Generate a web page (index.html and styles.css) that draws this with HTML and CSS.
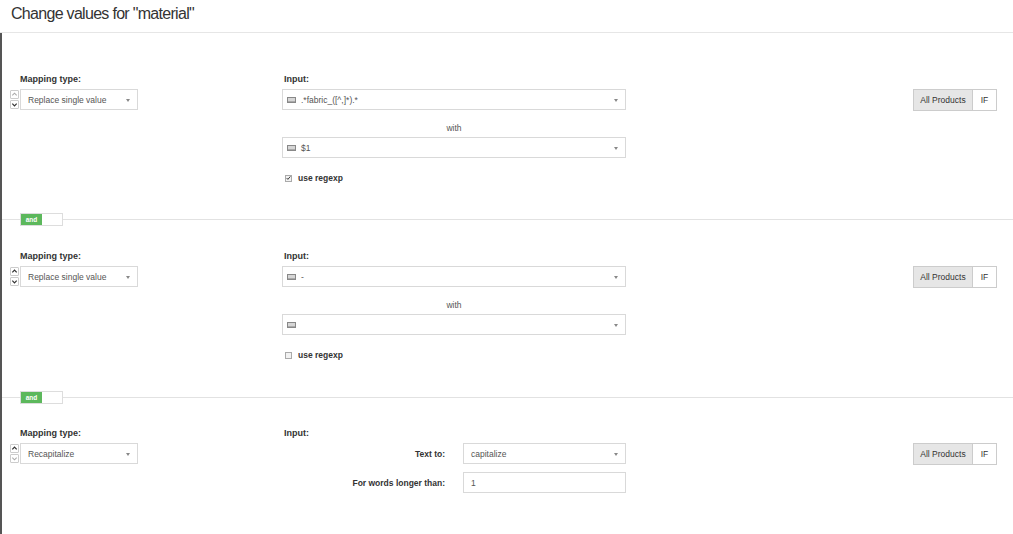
FILE: index.html
```html
<!DOCTYPE html>
<html>
<head>
<meta charset="utf-8">
<link rel="stylesheet" href="styles.css">
</head>
<body>
<div class="page">
  <div class="header"><h1 class="title">Change values for "material"</h1></div>
  <div class="main">

    <div class="section s1">
      <div class="col-left">
        <div class="label">Mapping type:</div>
        <div class="row-sel">
          <div class="spinner">
            <span class="sp light"><svg viewBox="0 0 8 8" width="7" height="7"><path d="M1.5 5 L4 2.5 L6.5 5" fill="none" stroke="currentColor" stroke-width="1.2"/></svg></span>
            <span class="sp"><svg viewBox="0 0 8 8" width="7" height="7"><path d="M1.5 3 L4 5.5 L6.5 3" fill="none" stroke="currentColor" stroke-width="1.4"/></svg></span>
          </div>
          <div class="select small"><span class="val">Replace single value</span><span class="caret"></span></div>
        </div>
      </div>
      <div class="col-mid">
        <div class="label ind">Input:</div>
        <div class="select wide"><span class="kb"></span><span class="val">.*fabric_([^,]*).*</span><span class="caret"></span></div>
        <div class="with">with</div>
        <div class="select wide"><span class="kb"></span><span class="val">$1</span><span class="caret"></span></div>
        <div class="check"><span class="box checked"><svg viewBox="0 0 8 8" width="6" height="6"><path d="M1 4 L3 6.2 L7 1.5" fill="none" stroke="#333" stroke-width="1.5"/></svg></span><span class="cl">use regexp</span></div>
      </div>
      <div class="col-right">
        <div class="btns"><span class="btn active">All Products</span><span class="btn">IF</span></div>
      </div>
    </div>

    <div class="sep sep1"><span class="toggle"><span class="on">and</span><span class="off"></span></span></div>

    <div class="section s2">
      <div class="col-left">
        <div class="label">Mapping type:</div>
        <div class="row-sel">
          <div class="spinner">
            <span class="sp"><svg viewBox="0 0 8 8" width="7" height="7"><path d="M1.5 5 L4 2.5 L6.5 5" fill="none" stroke="currentColor" stroke-width="1.4"/></svg></span>
            <span class="sp"><svg viewBox="0 0 8 8" width="7" height="7"><path d="M1.5 3 L4 5.5 L6.5 3" fill="none" stroke="currentColor" stroke-width="1.4"/></svg></span>
          </div>
          <div class="select small"><span class="val">Replace single value</span><span class="caret"></span></div>
        </div>
      </div>
      <div class="col-mid">
        <div class="label ind">Input:</div>
        <div class="select wide"><span class="kb"></span><span class="val">-</span><span class="caret"></span></div>
        <div class="with">with</div>
        <div class="select wide"><span class="kb"></span><span class="val"></span><span class="caret"></span></div>
        <div class="check"><span class="box"></span><span class="cl">use regexp</span></div>
      </div>
      <div class="col-right">
        <div class="btns"><span class="btn active">All Products</span><span class="btn">IF</span></div>
      </div>
    </div>

    <div class="sep sep2"><span class="toggle"><span class="on">and</span><span class="off"></span></span></div>

    <div class="section s3">
      <div class="col-left">
        <div class="label">Mapping type:</div>
        <div class="row-sel">
          <div class="spinner">
            <span class="sp"><svg viewBox="0 0 8 8" width="7" height="7"><path d="M1.5 5 L4 2.5 L6.5 5" fill="none" stroke="currentColor" stroke-width="1.4"/></svg></span>
            <span class="sp light"><svg viewBox="0 0 8 8" width="7" height="7"><path d="M1.5 3 L4 5.5 L6.5 3" fill="none" stroke="currentColor" stroke-width="1.2"/></svg></span>
          </div>
          <div class="select small"><span class="val">Recapitalize</span><span class="caret"></span></div>
        </div>
      </div>
      <div class="col-mid">
        <div class="label ind">Input:</div>
        <div class="form-row">
          <span class="flabel">Text to:</span>
          <div class="select narrow"><span class="val">capitalize</span><span class="caret"></span></div>
        </div>
        <div class="form-row">
          <span class="flabel">For words longer than:</span>
          <div class="select narrow"><span class="val">1</span></div>
        </div>
      </div>
      <div class="col-right">
        <div class="btns"><span class="btn active">All Products</span><span class="btn">IF</span></div>
      </div>
    </div>

  </div>
</div>
</body>
</html>
```
FILE: styles.css
```css
* { box-sizing: border-box; }
html, body { margin: 0; padding: 0; background: #fff; }
body {
  font-family: "Liberation Sans", Arial, sans-serif;
  color: #333;
  width: 1013px;
  height: 534px;
  overflow: hidden;
}
.page { width: 1013px; height: 534px; }
.header {
  height: 33px;
  border-bottom: 1px solid #e6e6e6;
  padding-left: 11px;
}
.title {
  margin: 0;
  font-weight: normal;
  font-size: 16px;
  letter-spacing: -0.7px;
  line-height: 20px;
  padding-top: 4px;
  color: #333;
}
.main {
  border-left: 2px solid #555;
  height: 501px;
  padding-top: 41px;
}
.section {
  display: flex;
  padding-left: 8px;
}
.col-left { width: 272px; }
.col-mid { width: 344px; }
.col-right { flex: 1; display: flex; justify-content: flex-end; padding-right: 16px; padding-top: 15px; }
.label {
  font-size: 9px;
  font-weight: bold;
  line-height: 10px;
  height: 15px;
  padding-left: 10px;
  color: #333;
}
.label.ind { padding-left: 2px; }
.row-sel { display: flex; align-items: flex-start; }
.spinner {
  width: 10px;
  display: flex;
  flex-direction: column;
  margin-top: 1px;
}
.sp {
  width: 9px;
  height: 9px;
  border: 1px solid #ccc;
  border-radius: 1px;
  display: flex;
  align-items: center;
  justify-content: center;
  color: #333;
  margin-bottom: 1px;
}
.sp.light { color: #aaa; }
.sp svg { display: block; }
.select {
  position: relative;
  height: 21px;
  border: 1px solid #d9d9d9;
  display: flex;
  align-items: center;
  font-size: 8.5px;
  color: #555;
  padding-left: 7px;
  background: #fff;
}
.select.small { width: 118px; }
.select.wide { width: 344px; padding-left: 3px; }
.select.narrow { width: 163px; padding-left: 7px; }
.kb {
  width: 9px;
  height: 6px;
  border: 1px solid #888;
  background: #d6d6d6;
  box-shadow: inset 0 -1px 0 #aaa;
  margin-right: 5px;
  margin-left: 1px;
}
.caret {
  position: absolute;
  right: 7px;
  top: 9px;
  width: 0;
  height: 0;
  border-left: 2.5px solid transparent;
  border-right: 2.5px solid transparent;
  border-top: 3px solid #888;
}
.with {
  text-align: center;
  font-size: 8.5px;
  color: #555;
  height: 27px;
  line-height: 16px;
  padding-top: 10px;
}
.check {
  display: flex;
  align-items: center;
  margin-top: 14px;
  padding-left: 3px;
  height: 12px;
}
.box {
  width: 7px;
  height: 7px;
  border: 1px solid #aaa;
  background: #f2f2f2;
  display: flex;
  align-items: center;
  justify-content: center;
  margin-right: 6px;
}
.box svg { display: block; }
.cl { font-size: 8.5px; font-weight: bold; color: #333; }
.btns { display: flex; height: 22px; }
.btn {
  border: 1px solid #ccc;
  font-size: 8.5px;
  line-height: 20px;
  padding: 0 6px;
  color: #333;
  background: #fff;
}
.btn.active { background: #e6e6e6; width: 60px; text-align: center; padding: 0; }
.btn + .btn { border-left: none; width: 24px; text-align: center; padding: 0; }
.sep {
  position: relative;
  height: 1px;
  background: #e2e2e2;
  margin-top: 35px;
  margin-bottom: 31px;
}
.sep.sep2 { margin-top: 36px; margin-bottom: 30px; }
.toggle {
  position: absolute;
  left: 18px;
  top: -6px;
  display: flex;
  height: 13px;
  border: 1px solid #ddd;
  background: #fff;
}
.on {
  background: #5cb85c;
  color: #fff;
  font-size: 6.5px;
  font-weight: bold;
  width: 21px;
  text-align: center;
  line-height: 11px;
}
.off { width: 20px; }
.form-row {
  display: flex;
  align-items: center;
  justify-content: flex-end;
  margin-bottom: 8px;
}
.flabel {
  font-size: 8.5px;
  font-weight: bold;
  color: #333;
  margin-right: 18px;
}
```
